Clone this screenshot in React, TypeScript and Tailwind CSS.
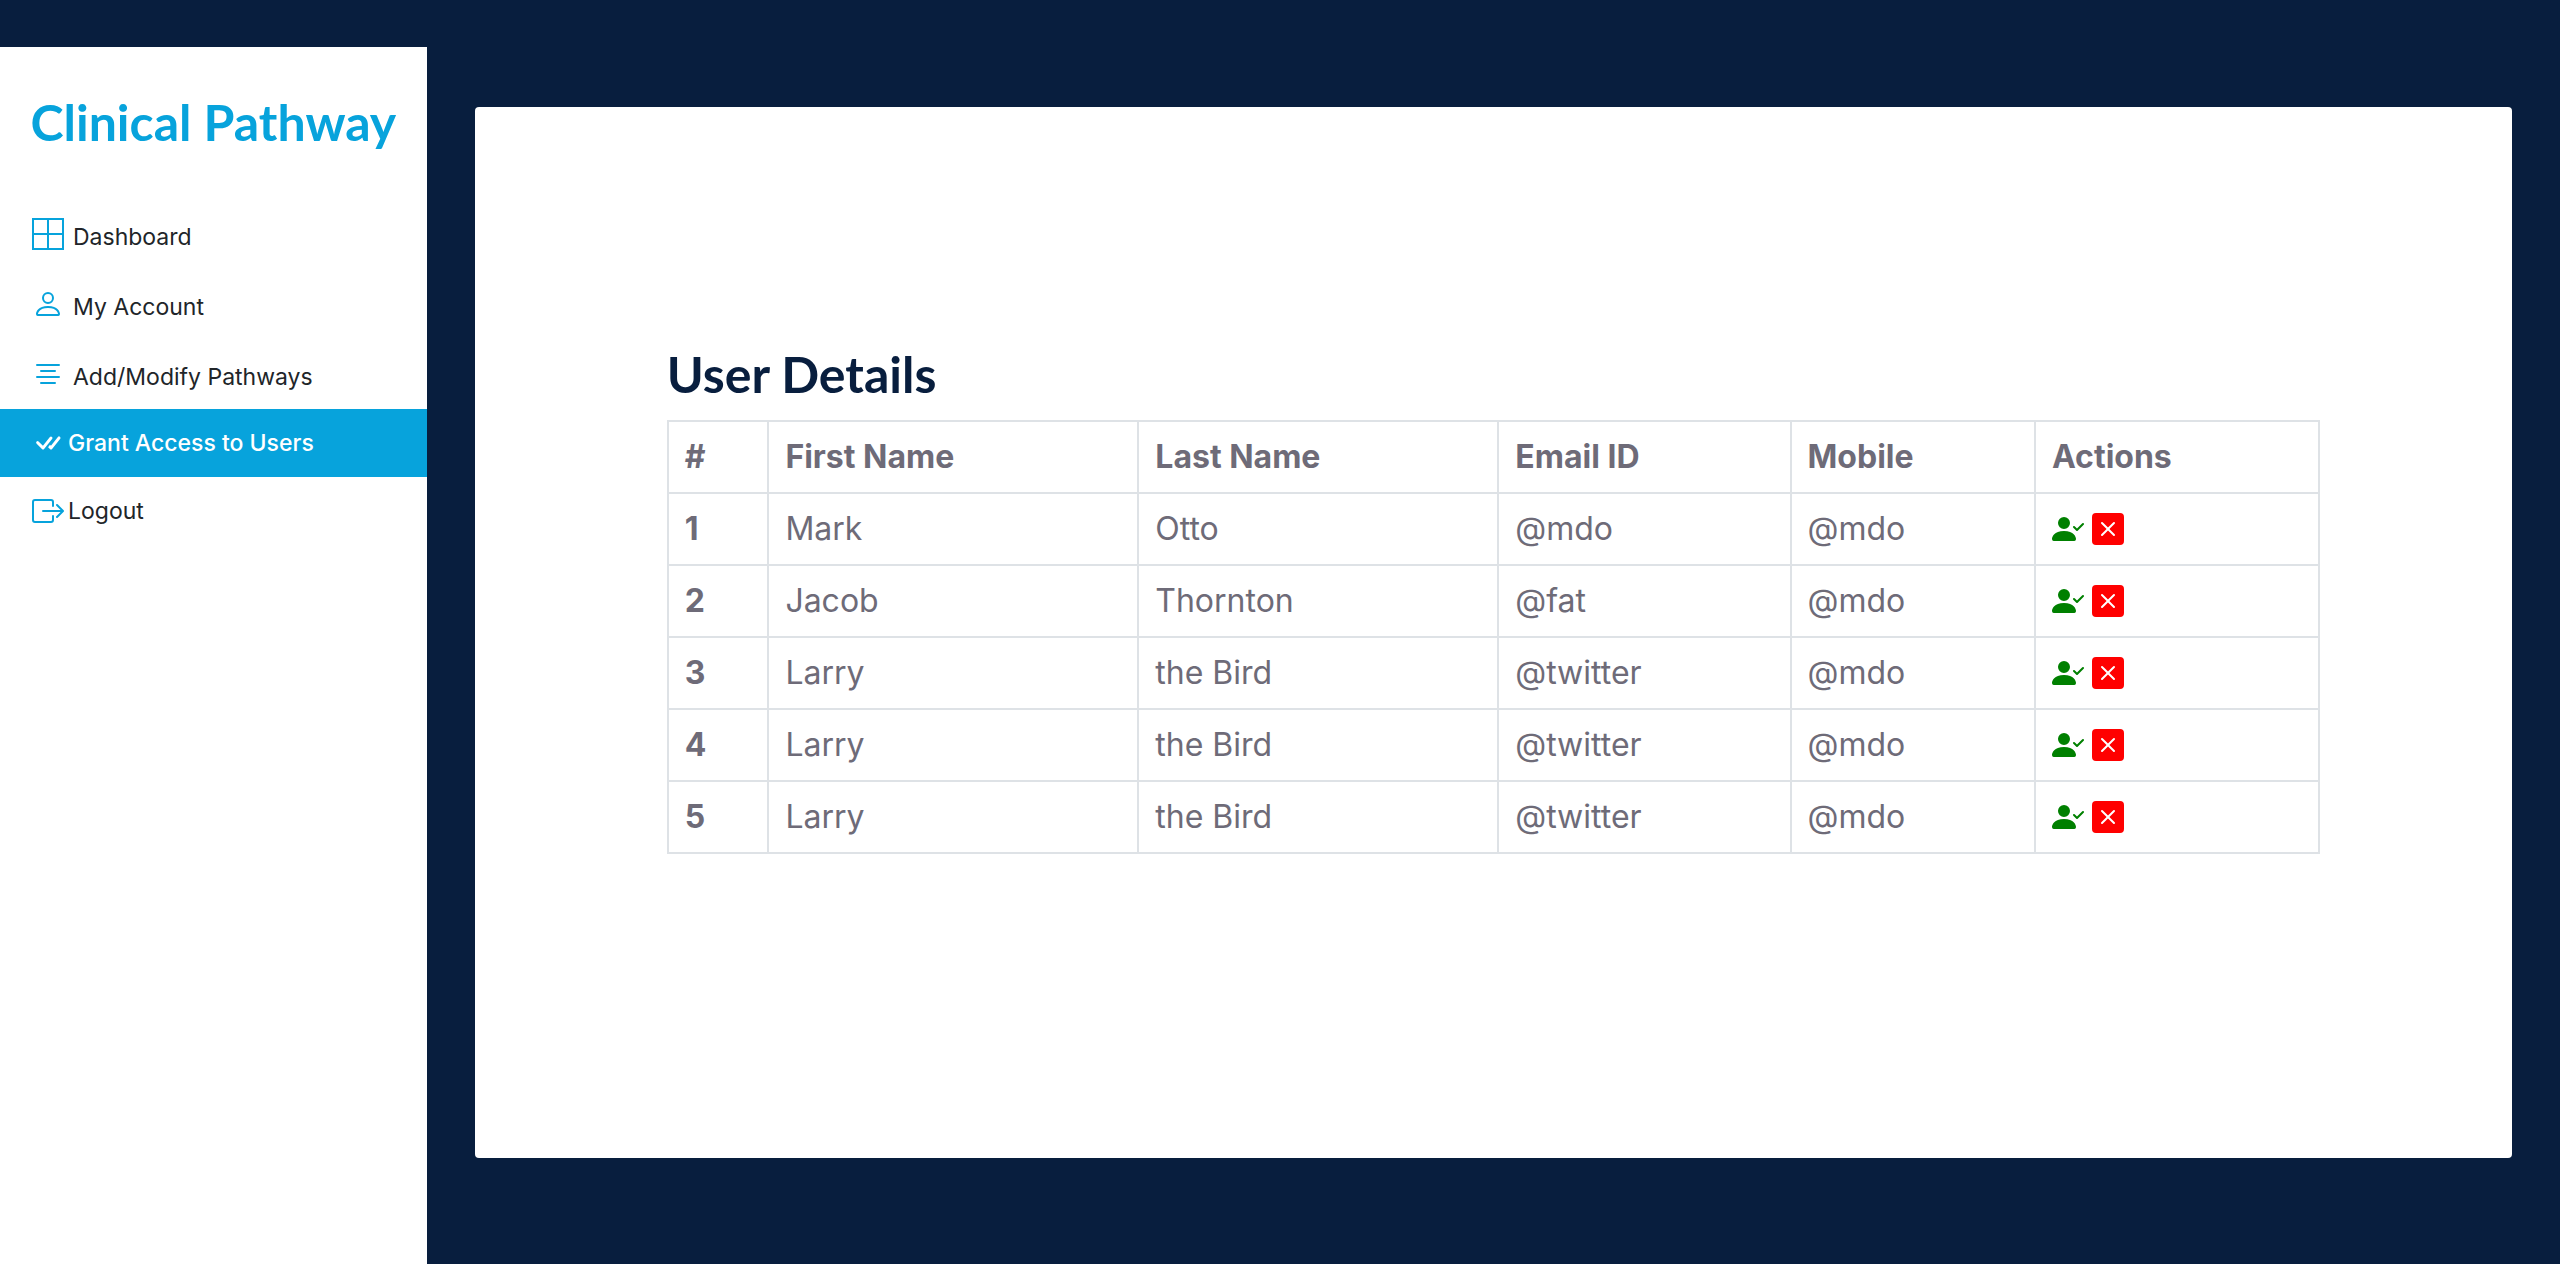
import React from 'react';
import type { IconType } from 'react-icons';
import {
  BsBorderAll,
  BsBoxArrowRight,
  BsCheckAll,
  BsPerson,
  BsPersonCheckFill,
  BsTextCenter,
  BsXSquareFill,
} from 'react-icons/bs';

type NavItem = { label: string; icon: IconType };

const pages: NavItem[] = [
  { label: 'Dashboard', icon: BsBorderAll },
  { label: 'My Account', icon: BsPerson },
  { label: 'Add/Modify Pathways', icon: BsTextCenter },
];

const columns = [
  { label: '#', width: 'w-[6.1%]' },
  { label: 'First Name', width: 'w-[22.4%]' },
  { label: 'Last Name', width: 'w-[21.8%]' },
  { label: 'Email ID', width: 'w-[17.7%]' },
  { label: 'Mobile', width: 'w-[14.8%]' },
  { label: 'Actions', width: 'w-[17.2%]' },
];

const users = [
  { id: 1, first: 'Mark', last: 'Otto', email: '@mdo', mobile: '@mdo' },
  { id: 2, first: 'Jacob', last: 'Thornton', email: '@fat', mobile: '@mdo' },
  { id: 3, first: 'Larry', last: 'the Bird', email: '@twitter', mobile: '@mdo' },
  { id: 4, first: 'Larry', last: 'the Bird', email: '@twitter', mobile: '@mdo' },
  { id: 5, first: 'Larry', last: 'the Bird', email: '@twitter', mobile: '@mdo' },
];

const cell = 'border-2 border-[#dee2e6] px-4 py-[11px] text-left';

function Sidebar() {
  return (
    <aside className="w-1/6 shrink-0 bg-white pt-[45px]">
      <h1 className="mb-[47px] text-center font-['Lato',sans-serif] text-[50px] leading-[60px] font-bold whitespace-nowrap text-[#07a3dc]">
        Clinical Pathway
      </h1>
      <nav className="text-[23px] leading-8 text-[#212529]">
        {pages.map(({ label, icon: Icon }) => (
          <a key={label} href="#" className="flex h-[70px] items-center gap-[9px] px-8">
            <Icon className="size-8 text-[#07a3dc]" />
            <span className="pt-1.5">{label}</span>
          </a>
        ))}
        <a
          href="#"
          aria-current="page"
          className="flex h-[68px] items-center gap-1 bg-[#07a3dc] px-8 font-medium text-white"
        >
          <BsCheckAll className="size-8" />
          Grant Access to Users
        </a>
        <a href="#" className="flex h-[68px] items-center gap-1 px-8">
          <BsBoxArrowRight className="size-8 text-[#07a3dc]" />
          Logout
        </a>
      </nav>
    </aside>
  );
}

function UserTable() {
  return (
    <table className="w-full table-fixed border-collapse text-[32px] leading-[48px] text-[#6e6b78]">
      <thead>
        <tr>
          {columns.map(({ label, width }) => (
            <th key={label} scope="col" className={`${cell} ${width} font-bold`}>
              {label}
            </th>
          ))}
        </tr>
      </thead>
      <tbody>
        {users.map((user) => (
          <tr key={user.id}>
            <th scope="row" className={`${cell} font-bold`}>
              {user.id}
            </th>
            <td className={cell}>{user.first}</td>
            <td className={cell}>{user.last}</td>
            <td className={cell}>{user.email}</td>
            <td className={cell}>{user.mobile}</td>
            <td className={cell}>
              <div className="flex items-center gap-2">
                <button type="button" aria-label="Grant access" className="text-[#008000]">
                  <BsPersonCheckFill className="size-8" />
                </button>
                <button type="button" aria-label="Deny access" className="text-[#ff0000]">
                  <BsXSquareFill className="size-8" />
                </button>
              </div>
            </td>
          </tr>
        ))}
      </tbody>
    </table>
  );
}

export default function App() {
  return (
    <div className="flex min-h-screen bg-[#081e3e] pt-[47px] font-['Inter',sans-serif]">
      <Sidebar />
      <main className="flex grow flex-col px-12 pt-15 pb-[106px]">
        <section className="grow rounded bg-white px-48 pt-[237px]">
          <h2 className="mb-4 font-['Lato',sans-serif] text-[50px] leading-[60px] font-bold text-[#081e3e]">
            User Details
          </h2>
          <UserTable />
        </section>
      </main>
    </div>
  );
}
